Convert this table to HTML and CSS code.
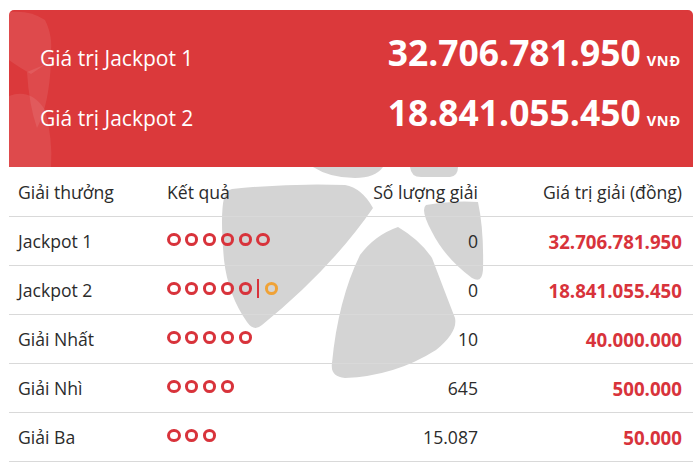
FILE: index.html
```html
<!DOCTYPE html>
<html lang="vi">
<head>
<meta charset="utf-8">
<title>Jackpot</title>
<link rel="stylesheet" href="styles.css">
</head>
<body>
<div class="card">
  <svg class="watermark" viewBox="9 10 684 463" width="684" height="463" aria-hidden="true">
    <g fill="#d4d4d4">
      <path d="M313,167 Q330,178 355,178 Q375,178 383,167 Z"/>
      <path d="M410,167 Q411,177 421,177 L450,177 Q458,176 458,167 Z"/>
      <path d="M232,189 Q290,183 345,185 Q362,188 373,208 Q330,270 262,325 Q254,332 247,322 Q228,295 224,260 Q220,215 224,198 Q226,190 232,189 Z"/>
      <path d="M398,227 Q420,240 432,258 Q448,300 455,318 Q458,332 436,350 Q395,376 345,378 Q330,377 332,363 Q338,300 360,255 Q375,235 398,227 Z"/>
      <path d="M426,205 Q455,200 478,202 Q484,230 483,270 Q482,284 472,278 Q445,258 432,232 Q420,210 426,205 Z"/>
    </g>
  </svg>
  <header class="jackpots">
    <svg class="deco" viewBox="0 0 60 157" width="60" height="157" aria-hidden="true">
      <g fill="#ffffff" fill-opacity="0.09">
        <path d="M0,2 Q22,0 36,10 Q46,30 40,52 L22,64 Q8,56 0,50 Z"/>
        <path d="M18,62 L42,52 Q40,95 28,118 Q20,95 18,62 Z"/>
        <path d="M0,86 Q22,78 36,100 Q44,130 42,157 L0,157 Z"/>
      </g>
    </svg>
    <div class="jp-row">
      <span class="jp-label">Giá trị Jackpot 1</span>
      <span class="jp-value">32.706.781.950<small>VNĐ</small></span>
    </div>
    <div class="jp-row">
      <span class="jp-label">Giá trị Jackpot 2</span>
      <span class="jp-value">18.841.055.450<small>VNĐ</small></span>
    </div>
  </header>
  <div class="prizes">
    <div class="row head">
      <span>Giải thưởng</span>
      <span>Kết quả</span>
      <span class="num">Số lượng giải</span>
      <span class="num">Giá trị giải (đồng)</span>
    </div>
    <div class="row">
      <span>Jackpot 1</span>
      <span class="balls"><i></i><i></i><i></i><i></i><i></i><i></i></span>
      <span class="num">0</span>
      <span class="num money">32.706.781.950</span>
    </div>
    <div class="row">
      <span>Jackpot 2</span>
      <span class="balls"><i></i><i></i><i></i><i></i><i></i><b class="sep"></b><i class="gold"></i></span>
      <span class="num">0</span>
      <span class="num money">18.841.055.450</span>
    </div>
    <div class="row">
      <span>Giải Nhất</span>
      <span class="balls"><i></i><i></i><i></i><i></i><i></i></span>
      <span class="num">10</span>
      <span class="num money">40.000.000</span>
    </div>
    <div class="row">
      <span>Giải Nhì</span>
      <span class="balls"><i></i><i></i><i></i><i></i></span>
      <span class="num">645</span>
      <span class="num money">500.000</span>
    </div>
    <div class="row">
      <span>Giải Ba</span>
      <span class="balls"><i></i><i></i><i></i></span>
      <span class="num">15.087</span>
      <span class="num money">50.000</span>
    </div>
  </div>
</div>
</body>
</html>
```

FILE: styles.css
```css
html, body {
  margin: 0;
  padding: 0;
  background: #ffffff;
}

body {
  font-family: "Open Sans", "Liberation Sans", sans-serif;
  color: #2b2b2b;
}

.card {
  position: relative;
  width: 684px;
  margin: 10px 0 0 9px;
}

.watermark {
  position: absolute;
  left: 0;
  top: 0;
  z-index: 0;
}

.jackpots {
  position: relative;
  z-index: 1;
  height: 157px;
  box-sizing: border-box;
  padding: 6px 12px 0 31px;
  background: #db393b;
  border-radius: 5px 5px 0 0;
  color: #ffffff;
  overflow: hidden;
}

.deco {
  position: absolute;
  left: 0;
  top: 0;
}

.jp-row {
  position: relative;
  display: flex;
  align-items: baseline;
  justify-content: space-between;
  height: 60px;
  padding-top: 24px;
  box-sizing: border-box;
}

.jp-label {
  font-size: 21px;
  line-height: 24px;
}

.jp-value {
  font-size: 35.4px;
  font-weight: 700;
  line-height: 24px;
}

.jp-value small {
  font-size: 14.5px;
  font-weight: 700;
  margin-left: 6px;
  letter-spacing: 0.8px;
}

.prizes {
  position: relative;
  z-index: 1;
}

.row {
  display: grid;
  grid-template-columns: 149px 193px 118px 204px;
  align-items: center;
  box-sizing: border-box;
  height: 49px;
  padding: 0 11px 0 9px;
  border-bottom: 1px solid #d9d9d9;
  font-size: 17.6px;
}

.row.head {
  height: 50px;
}

.num {
  text-align: right;
}

.money {
  color: #d8333b;
  font-weight: 700;
  font-size: 18.7px;
}

.balls {
  display: flex;
  align-items: center;
  gap: 4.4px;
  margin-bottom: 4px;
}

.balls i {
  display: block;
  width: 13.5px;
  height: 13px;
  box-sizing: border-box;
  border: 3.5px solid #d8333b;
  border-radius: 50%;
}

.balls i.gold {
  border-color: #f0a236;
}

.balls .sep {
  display: block;
  width: 2px;
  height: 19px;
  background: #d8333b;
  margin: 0 1px;
}
```
